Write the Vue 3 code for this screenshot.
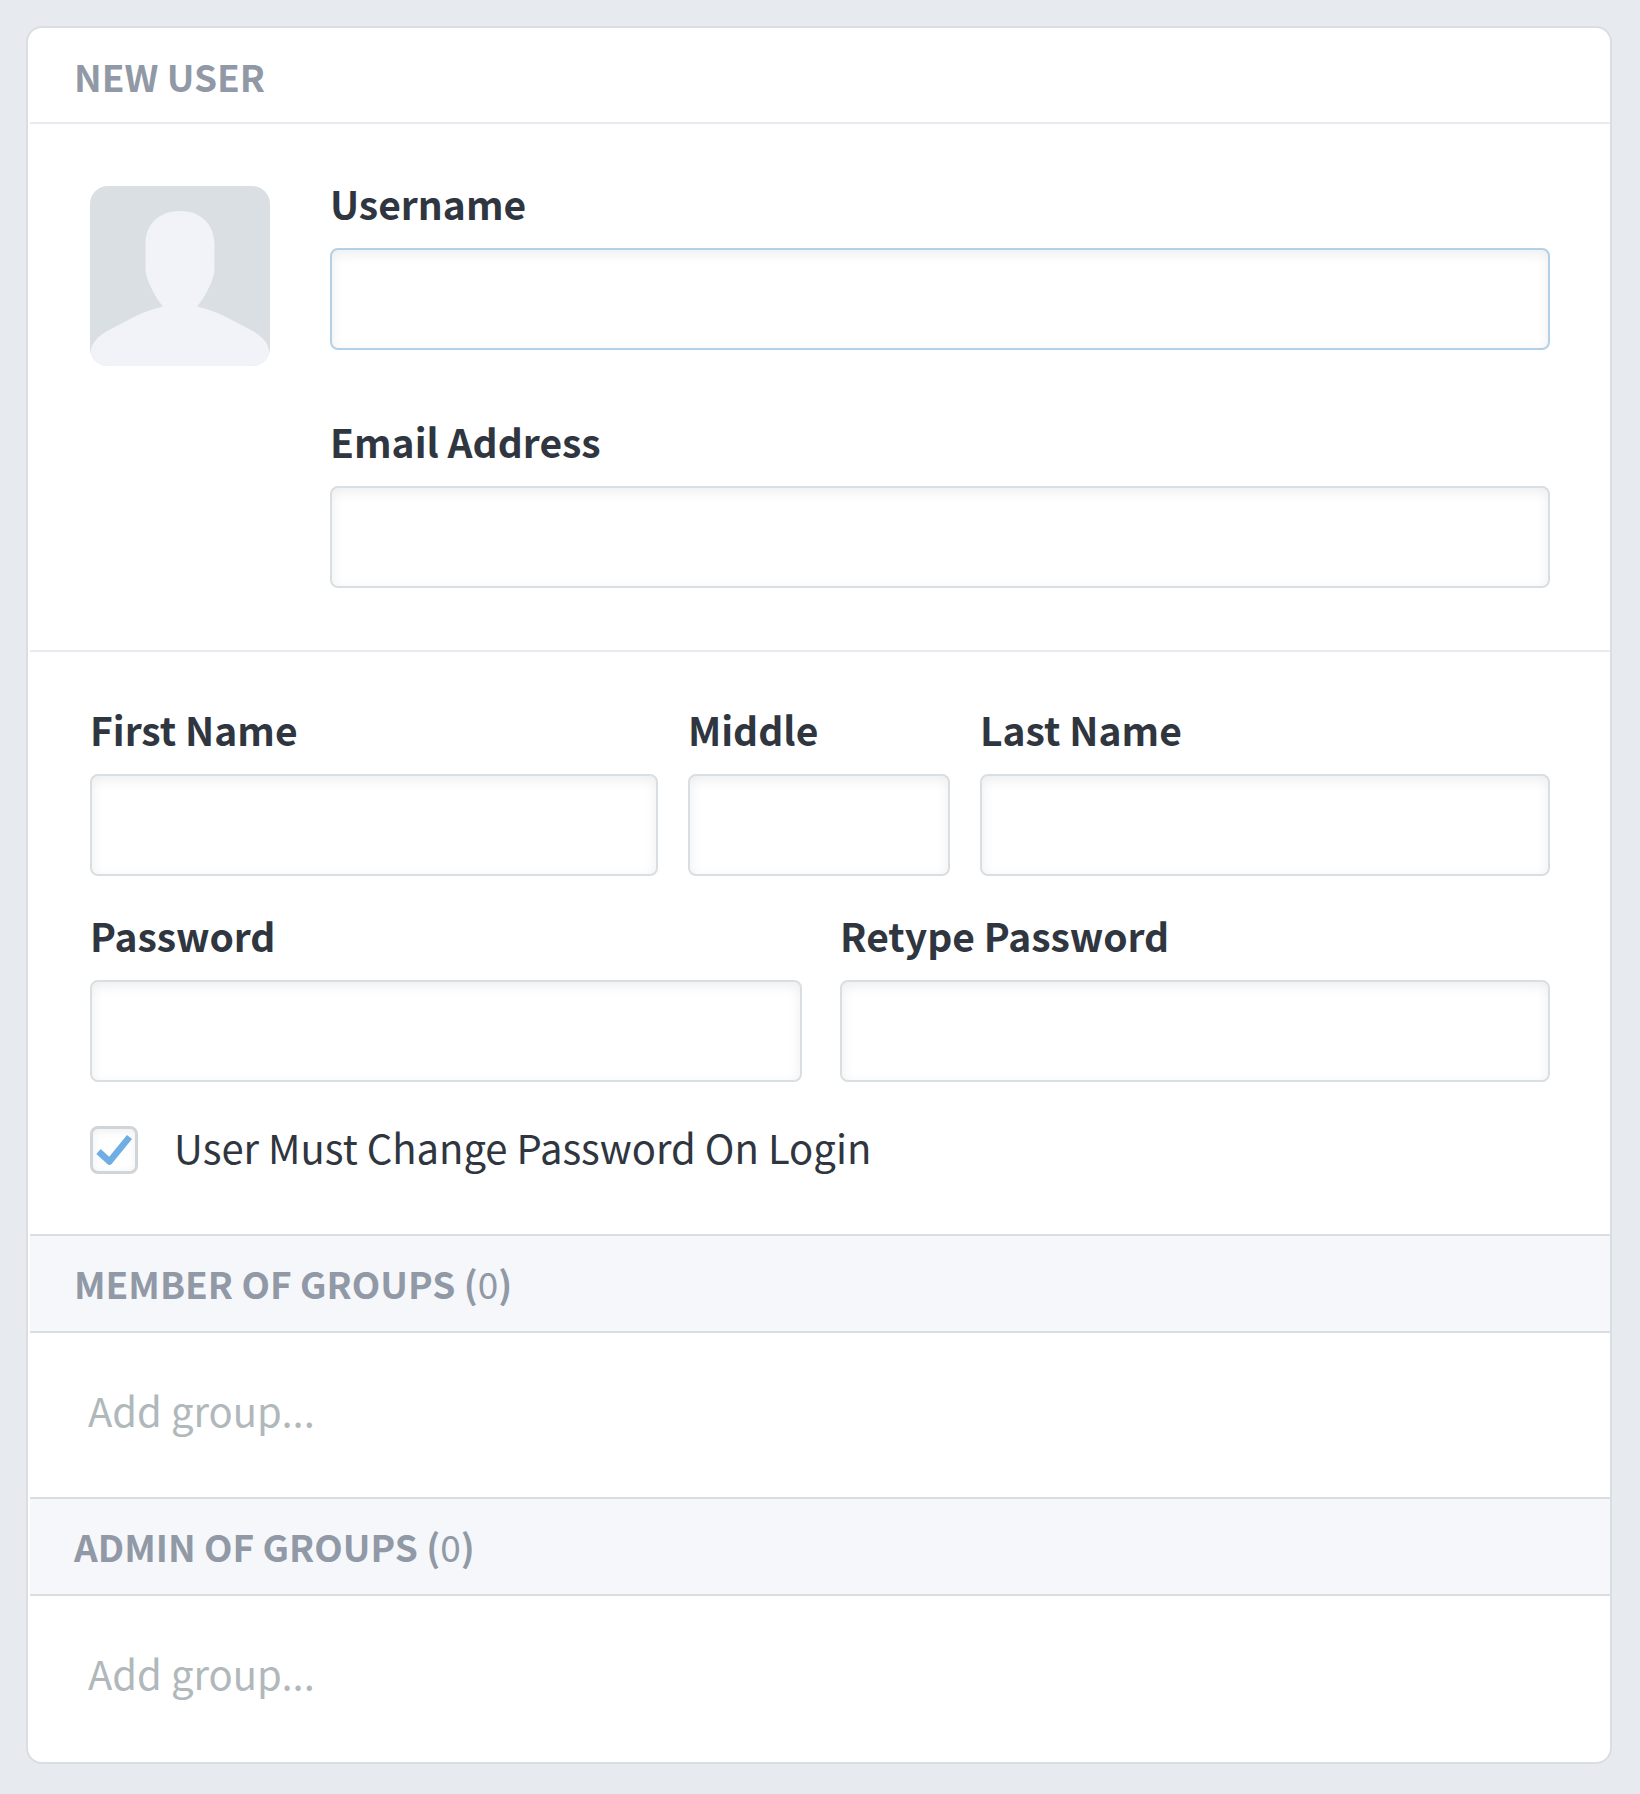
<script setup>
import { ref } from 'vue'

const form = ref({
  username: '',
  email: '',
  first: '',
  middle: '',
  last: '',
  password: '',
  retype: '',
  mustChange: true,
})

const groups = ref([
  { id: 'member', title: 'Member of groups', count: 0, query: '' },
  { id: 'admin', title: 'Admin of groups', count: 0, query: '' },
])
</script>

<template>
  <form class="card" @submit.prevent>
    <h1 class="heading">New user</h1>

    <section class="account">
      <svg class="avatar" viewBox="0 0 180 180" role="img" aria-label="User picture">
        <rect width="180" height="180" fill="#d9dfe3" />
        <path
          fill="#f1f3f8"
          d="M90 25C69 25 55.500 38 55.500 58V80C55.500 86 56 90 59 97C63 106 67 114 73 120.500C62 123 51 127 40 133L17 145C6 152 1 158 1 166V180H179V166C179 158 174 152 163 145L140 133C129 127 118 123 107 120.500C113 114 117 106 121 97C124 90 124.500 86 124.500 80V58C124 38 111 25 90 25Z"
        />
      </svg>
      <div class="stack">
        <div class="field">
          <label for="username">Username</label>
          <input id="username" v-model="form.username" class="active" type="text" />
        </div>
        <div class="field">
          <label for="email">Email Address</label>
          <input id="email" v-model="form.email" type="email" />
        </div>
      </div>
    </section>

    <section class="details">
      <div class="row names">
        <div class="field">
          <label for="first">First Name</label>
          <input id="first" v-model="form.first" type="text" />
        </div>
        <div class="field">
          <label for="middle">Middle</label>
          <input id="middle" v-model="form.middle" type="text" />
        </div>
        <div class="field">
          <label for="last">Last Name</label>
          <input id="last" v-model="form.last" type="text" />
        </div>
      </div>
      <div class="row passwords">
        <div class="field">
          <label for="password">Password</label>
          <input id="password" v-model="form.password" type="password" />
        </div>
        <div class="field">
          <label for="retype">Retype Password</label>
          <input id="retype" v-model="form.retype" type="password" />
        </div>
      </div>
      <label class="check">
        <span class="box">
          <input v-model="form.mustChange" type="checkbox" />
          <svg v-if="form.mustChange" class="tick" viewBox="0 0 48 48" aria-hidden="true">
            <path
              d="M8.500 25.500L19.500 35.500L39.500 11"
              fill="none"
              stroke="#6faee5"
              stroke-width="6.500"
              stroke-linejoin="round"
            />
          </svg>
        </span>
        User Must Change Password On Login
      </label>
    </section>

    <section v-for="group in groups" :key="group.id" class="group">
      <h2 class="heading">{{ group.title }} (<span class="count">{{ group.count }}</span>)</h2>
      <input v-model="group.query" type="text" placeholder="Add group..." :aria-label="group.title" />
    </section>
  </form>
</template>

<style>
body {
  background: #e7eaef;
}
</style>

<style scoped>
* {
  box-sizing: border-box;
}

.card {
  margin: 26px 28px 30px 26px;
  padding: 0 0 2px 2px;
  border: 2px solid #d9dee3;
  border-radius: 16px;
  background: #fff;
  color: #2f363f;
  font-family: "Noto Sans CJK SC", "Noto Sans", sans-serif;
  font-size: 40px;
  line-height: 34px;
}

.heading {
  margin: 0;
  padding: 31px 44px 29px;
  border-bottom: 2px solid #e7eaef;
  color: #9099a5;
  font-size: 37px;
  font-weight: 700;
  line-height: 34px;
  text-transform: uppercase;
}

.account {
  display: flex;
  gap: 60px;
  padding: 62px 60px;
  border-bottom: 2px solid #e7eaef;
}

.avatar {
  flex: none;
  width: 180px;
  height: 180px;
  border-radius: 18px;
}

.stack {
  display: flex;
  flex: 1;
  flex-direction: column;
  gap: 74px;
}

.field {
  display: flex;
  flex-direction: column;
  gap: 28px;
  min-width: 0;
}

.field label {
  font-size: 39px;
  font-weight: 700;
}

input {
  font: inherit;
  color: inherit;
}

.field input {
  width: 100%;
  height: 102px;
  padding: 0 20px;
  border: 2px solid #d9dee3;
  border-radius: 8px;
  outline: none;
  background: #fff;
  box-shadow: inset 0 4px 12px rgba(47, 54, 63, 0.09);
}

.field input.active {
  border-color: #b3d0e5;
}

.details {
  display: flex;
  flex-direction: column;
  gap: 42px;
  padding: 60px;
}

.row {
  display: grid;
}

.names {
  grid-template-columns: 568fr 262fr 570fr;
  gap: 30px;
}

.passwords {
  grid-template-columns: 712fr 710fr;
  gap: 38px;
}

.check {
  display: flex;
  align-items: flex-start;
  gap: 36px;
  padding-top: 2px;
  line-height: 42px;
}

.box {
  position: relative;
  width: 48px;
  height: 48px;
}

.box input {
  display: block;
  width: 100%;
  height: 100%;
  margin: 0;
  appearance: none;
  border: 3px solid #d0d5da;
  border-radius: 8px;
  background: #fff;
  box-shadow: inset 0 2px 8px rgba(47, 54, 63, 0.08);
}

.tick {
  position: absolute;
  inset: 0;
  pointer-events: none;
}

.group .heading {
  padding: 30px 44px 31px;
  border-top: 2px solid #d9dee3;
  border-bottom-color: #d9dee3;
  background: #f5f7fb;
}

.count {
  font-weight: 400;
}

.group input {
  display: block;
  width: 100%;
  height: 164px;
  padding: 26px 58px 36px;
  border: 0;
  outline: none;
  background: transparent;
}

.group input::placeholder {
  color: #b0b8bb;
  opacity: 1;
}
</style>
